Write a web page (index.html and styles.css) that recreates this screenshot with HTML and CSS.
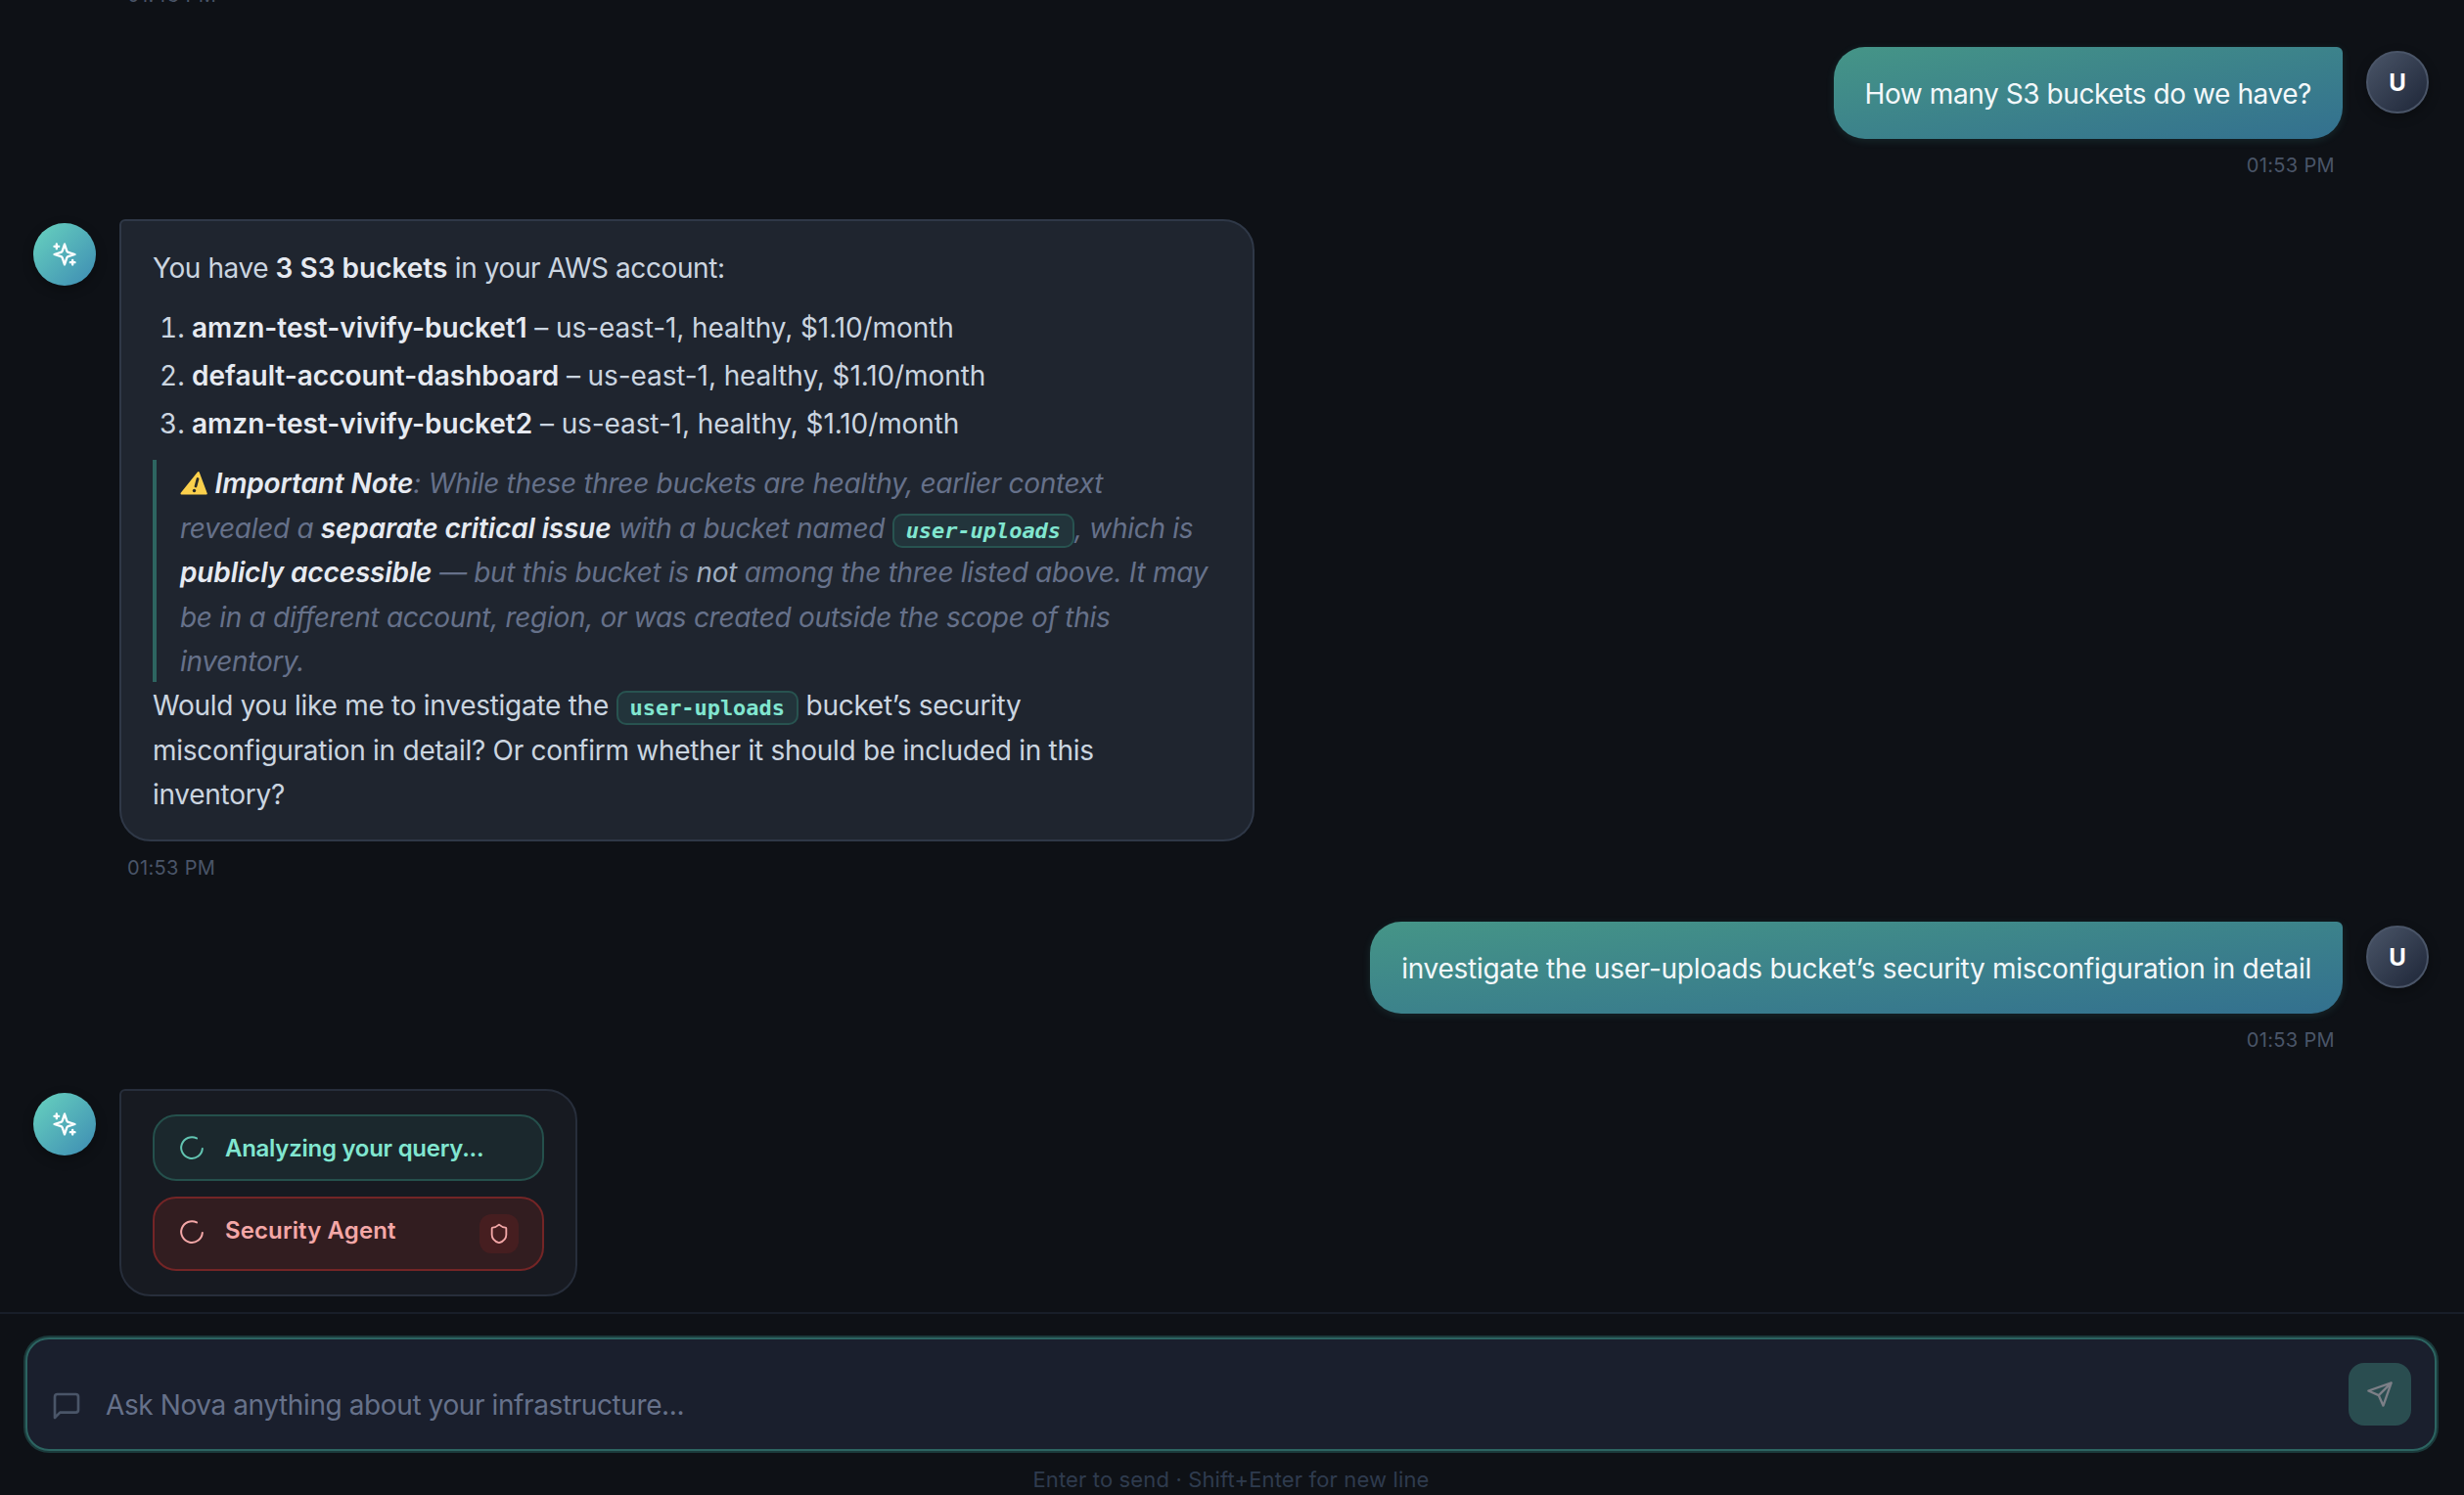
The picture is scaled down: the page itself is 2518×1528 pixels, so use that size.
FILE: index.html
```html
<!DOCTYPE html>
<html lang="en">
<head>
    <meta charset="UTF-8">
    <meta name="viewport" content="width=device-width, initial-scale=1.0">
    <title>Nova</title>
    <link rel="stylesheet" href="styles.css">
</head>
<body>
    <!-- Shared icons -->
    <svg class="icon-defs" aria-hidden="true">
        <symbol id="sparkles" viewBox="0 0 24 24">
            <path d="m12 3-1.912 5.813a2 2 0 0 1-1.275 1.275L3 12l5.813 1.912a2 2 0 0 1 1.275 1.275L12 21l1.912-5.813a2 2 0 0 1 1.275-1.275L21 12l-5.813-1.912a2 2 0 0 1-1.275-1.275L12 3Z"/>
            <path d="M5 3v4M19 17v4M3 5h4M17 19h4"/>
        </symbol>
        <symbol id="loader" viewBox="0 0 24 24">
            <path d="M21.300 12.800a9.300 9.300 0 1 1-5-9"/>
        </symbol>
    </svg>

    <!-- Conversation -->
    <main class="messages">
        <div class="time time-previous">01:43 PM</div>

        <div class="message user">
            <div class="message-body">
                <div class="bubble"><p class="tight">How many S3 buckets do we have?</p></div>
                <div class="time">01:53 PM</div>
            </div>
            <div class="avatar">U</div>
        </div>

        <div class="message assistant">
            <div class="avatar"><svg class="icon"><use href="#sparkles"/></svg></div>
            <div class="message-body">
                <div class="bubble">
                    <p class="tight">You have <strong>3 S3 buckets</strong> in your AWS account:</p>
                    <ol>
                        <li><strong>amzn-test-vivify-bucket1</strong> – us-east-1, healthy, $1.10/month</li>
                        <li><strong>default-account-dashboard</strong> – us-east-1, healthy, $1.10/month</li>
                        <li><strong>amzn-test-vivify-bucket2</strong> – us-east-1, healthy, $1.10/month</li>
                    </ol>
                    <blockquote>
                        <svg class="warning" viewBox="0 0 28 26"><path d="M18.800 2 26.800 23.500H1.500Z" fill="#fbd04c" stroke="#fbd04c" stroke-width="2" stroke-linejoin="round"/><path d="M18 8.500 16 16" stroke="#2b2a26" stroke-width="2.800" stroke-linecap="round"/><circle cx="14.500" cy="20.500" r="1.700" fill="#2b2a26"/></svg>
                        <strong>Important Note</strong>: While these three buckets are healthy, earlier context<br>
                        revealed a <strong>separate critical issue</strong> with a bucket named <code>user-uploads</code>, which is<br>
                        <strong>publicly accessible</strong> — but this bucket is <em>not</em> among the three listed above. It may<br>
                        be in a different account, region, or was created outside the scope of this<br>
                        inventory.
                    </blockquote>
                    <p>Would you like me to investigate the <code>user-uploads</code> bucket’s security<br>
                    misconfiguration in detail? Or confirm whether it should be included in this<br>
                    inventory?</p>
                </div>
                <div class="time">01:53 PM</div>
            </div>
        </div>

        <div class="message user">
            <div class="message-body">
                <div class="bubble"><p>investigate the user-uploads bucket’s security misconfiguration in detail</p></div>
                <div class="time">01:53 PM</div>
            </div>
            <div class="avatar">U</div>
        </div>

        <div class="message assistant">
            <div class="avatar"><svg class="icon"><use href="#sparkles"/></svg></div>
            <div class="bubble progress">
                <div class="step analyzing">
                    <svg class="spinner"><use href="#loader"/></svg>
                    <span>Analyzing your query...</span>
                </div>
                <div class="step security">
                    <svg class="spinner"><use href="#loader"/></svg>
                    <span>Security Agent</span>
                    <div class="badge">
                        <svg viewBox="0 0 24 24"><path d="M20 13c0 5-3.5 7.5-7.66 8.95a1 1 0 0 1-.67-.01C7.5 20.5 4 18 4 13V6a1 1 0 0 1 1-1c2 0 4.500-1.200 6.240-2.720a1.170 1.170 0 0 1 1.520 0C14.510 3.810 17 5 19 5a1 1 0 0 1 1 1z"/></svg>
                    </div>
                </div>
            </div>
        </div>
    </main>

    <!-- Message input -->
    <footer class="composer">
        <div class="input-box">
            <svg class="chat-icon" viewBox="0 0 24 24"><path d="M21 15a2 2 0 0 1-2 2H7l-4 4V5a2 2 0 0 1 2-2h14a2 2 0 0 1 2 2z"/></svg>
            <div class="placeholder">Ask Nova anything about your infrastructure...</div>
            <button class="send" aria-label="Send">
                <svg viewBox="0 0 24 24"><path d="m22 2-7 20-4-9-9-4ZM22 2 11 13"/></svg>
            </button>
        </div>
        <div class="hint">Enter to send · Shift+Enter for new line</div>
    </footer>
</body>
</html>
```

FILE: styles.css
```css
* {
    box-sizing: border-box;
}

body {
    margin: 0;
    height: 1528px;
    display: flex;
    flex-direction: column;
    overflow: hidden;
    background-color: #0e1116;
    color: #cbd5e0;
    font-family: Inter, "Liberation Sans", sans-serif;
    font-size: 28px;
    line-height: 45.5px;
    letter-spacing: -0.27px;
}

p, ol, blockquote {
    margin: 0;
}

svg {
    fill: none;
    stroke: currentColor;
    stroke-width: 2;
    stroke-linecap: round;
    stroke-linejoin: round;
    flex-shrink: 0;
}

.icon-defs {
    display: none;
}

/* Conversation */
.messages {
    height: 1341px;
    padding: 0 36px 0 34px;
    overflow: hidden;
}

.message {
    display: flex;
    gap: 24px;
    height: 176px;
}

.message.user {
    justify-content: flex-end;
}

.message.assistant {
    height: 718px;
}

.message.user + .message.assistant:last-child {
    height: 212px;
    margin-top: -5px;
}

.time {
    padding: 0 8px;
    margin-top: 12px;
    font-size: 20px;
    line-height: 30px;
    letter-spacing: 0.35px;
    color: #4a5568;
}

.user .time {
    text-align: right;
}

/* Scrolled almost out of view */
.time-previous {
    height: 68px;
    margin: -20px 0 0 88px;
}

/* Avatars */
.avatar {
    width: 64px;
    height: 64px;
    margin-top: 4px;
    padding-top: 1px;
    flex-shrink: 0;
    display: flex;
    align-items: center;
    justify-content: center;
    border-radius: 50%;
    font-size: 24px;
    font-weight: 700;
    color: white;
    box-shadow: 0 4px 12px rgba(0, 0, 0, 0.3);
}

.user .avatar {
    border: 2px solid #4a5568;
    background: linear-gradient(135deg, #4a5568, #1e2638);
}

.assistant .avatar {
    padding-top: 0;
    background: linear-gradient(135deg, #68d3bf, #3d8bb3);
}

.avatar .icon {
    width: 28px;
    height: 28px;
}

/* Bubbles */
.user .bubble {
    height: 94px;
    padding: 26px 32px 22px;
    border-radius: 32px 6px 32px 32px;
    background: linear-gradient(to bottom right, #459587, #33708f);
    color: #f3f8fa;
    box-shadow: 0 2px 8px rgba(79, 209, 197, 0.12);
    white-space: nowrap;
}

.assistant .bubble {
    width: 1160px;
    height: 636px;
    padding: 26px 32px 22px;
    border: 2px solid #2f3847;
    border-radius: 6px 32px 32px 32px;
    background-color: #1f252f;
    white-space: nowrap;
}

.bubble strong {
    font-weight: 600;
    letter-spacing: 0;
    color: #e6eaf1;
}

.bubble .tight {
    letter-spacing: -0.42px;
}

.bubble ol {
    margin: 15.5px 0 13.5px;
    padding-left: 40px;
    letter-spacing: -0.1px;
}

.bubble li + li {
    margin-top: 3.5px;
}

.bubble blockquote {
    height: 227px;
    margin-bottom: 2px;
    padding: 2px 0 0 24px;
    border-left: 4px solid #2d6560;
    font-style: italic;
    letter-spacing: -0.3px;
    color: #66718a;
}

.bubble blockquote strong {
    letter-spacing: -0.14px;
}

.bubble em {
    color: #a0aec0;
}

.bubble code {
    padding: 3px 12px;
    border: 2px solid #285350;
    border-radius: 10px;
    background-color: #22343b;
    color: #81e6d0;
    font-family: "DejaVu Sans Mono", "Liberation Mono", monospace;
    font-size: 22px;
    font-weight: 700;
    line-height: 1;
    letter-spacing: -0.05px;
}

.warning {
    width: 28px;
    height: 26px;
    vertical-align: -3px;
    stroke: none;
}

/* Agent progress */
.assistant .progress {
    width: 468px;
    height: 212px;
    display: flex;
    flex-direction: column;
    gap: 16px;
    padding-top: 24px;
    border-color: #272e3b;
    background-color: #171a21;
}

.step {
    display: flex;
    align-items: center;
    height: 68px;
    padding: 0 24px;
    border: 2px solid;
    border-radius: 24px;
    font-size: 24px;
    font-weight: 600;
}

.step span {
    flex: 1;
    margin-left: 20px;
}

.spinner {
    width: 28px;
    height: 28px;
    stroke-width: 1.7;
}

.analyzing {
    border-color: #25504c;
    background-color: #1b282d;
    color: #81e6d0;
}

.analyzing .spinner {
    color: #62c4b1;
}

.analyzing span {
    padding-top: 2px;
}

.security {
    height: 76px;
    border-color: #742526;
    background-color: #321d20;
    color: #f4a7a7;
    letter-spacing: 0.1px;
}

.security .spinner {
    margin-bottom: 4px;
}

.security span {
    padding-bottom: 6px;
}

.badge {
    display: flex;
    align-items: center;
    justify-content: center;
    width: 40px;
    height: 40px;
    border-radius: 12px;
    background-color: #461e20;
}

.badge svg {
    width: 22px;
    height: 22px;
}

/* Message input */
.composer {
    height: 187px;
    padding: 24px 28px 0 26px;
    border-top: 2px solid #181e29;
}

.input-box {
    display: flex;
    align-items: flex-end;
    height: 116px;
    padding: 24px;
    border: 2px solid #2c6461;
    border-radius: 24px;
    background-color: #1a1f2d;
    box-shadow: 0 0 0 2px #1b3a3b;
}

.chat-icon {
    width: 32px;
    height: 32px;
    margin-bottom: 4px;
    color: #4a5568;
}

.placeholder {
    flex: 1;
    margin: 0 0 -2px 24px;
    letter-spacing: -0.4px;
    color: #66718a;
}

.send {
    display: flex;
    align-items: center;
    justify-content: center;
    width: 64px;
    height: 64px;
    padding: 0;
    border: none;
    border-radius: 16px;
    background-color: #2a4d50;
    color: #7c7f87;
}

.send svg {
    width: 28px;
    height: 28px;
}

.hint {
    margin-top: 14px;
    font-size: 22px;
    line-height: 30px;
    letter-spacing: 0.14px;
    text-align: center;
    color: #2f3b4e;
}
```
